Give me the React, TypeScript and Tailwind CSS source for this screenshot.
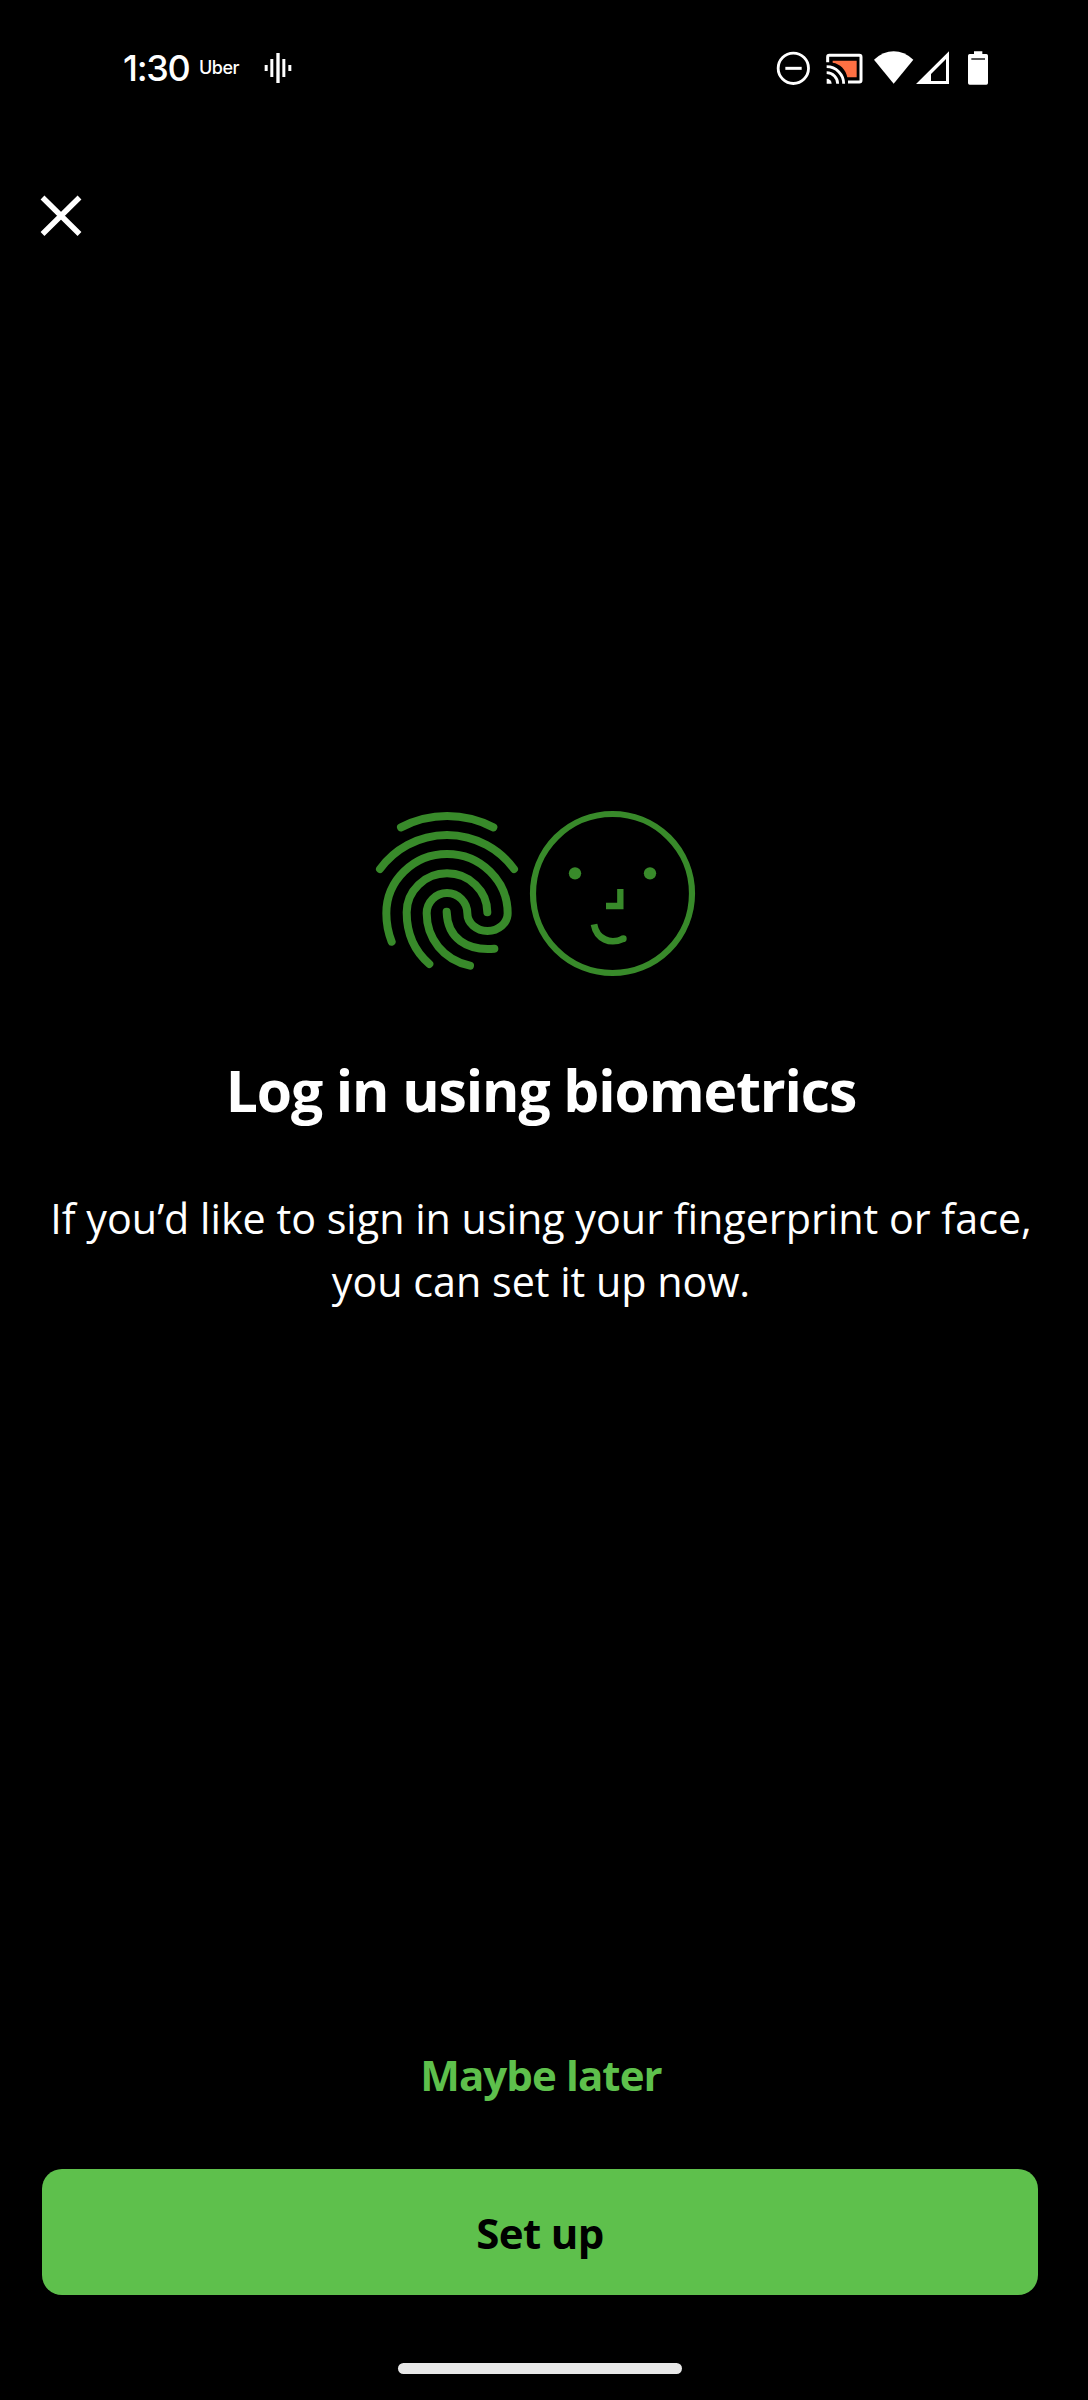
function StatusBar() {
  return (
    <header className="flex h-[136px] items-center pl-[123px]">
      <span className="w-[76px] font-['Inter'] text-[36px] leading-none font-medium tracking-[-1.3px]">1:30</span>
      <span className="w-[65px] font-['Inter'] text-[18px] leading-none font-medium tracking-[-0.5px]">Uber</span>
      <svg className="h-[30px] w-[30px]" viewBox="0 0 90 90" fill="white">
        <rect x="2" y="36" width="9" height="18" />
        <rect x="19" y="18" width="9" height="54" />
        <rect x="37" y="0" width="10" height="90" />
        <rect x="55" y="18" width="9" height="54" />
        <rect x="73" y="36" width="9" height="18" />
      </svg>
      <div className="mr-[99px] ml-auto flex h-[35px]">
        <svg className="mr-[14px] w-[35px]" viewBox="48 60 105 105" fill="none" stroke="white">
          <circle cx="100" cy="112" r="45.5" strokeWidth="8.5" />
          <path d="M76 112H125" strokeWidth="9" />
        </svg>
        <svg className="mr-[9px] w-[39px]" viewBox="195 60 117 105" fill="none">
          <path d="M218 89H290V139H262C258 116 240 98 218 95Z" fill="#ff7043" />
          <path d="M203 94V78Q203 73 208 73H298Q303 73 303 78V148Q303 153 298 153H264" stroke="white" strokeWidth="9" />
          <path d="M200 107A51 51 0 0 1 251 158M200 125A33 33 0 0 1 233 158" stroke="white" strokeWidth="8.5" />
          <path d="M200 143A15 15 0 0 1 215 158H200Z" fill="white" />
        </svg>
        <svg className="mr-px w-[41px]" viewBox="339 60 123 105" fill="white">
          <path d="M342 86Q370 61 401 61T460 86L401 158Z" />
        </svg>
        <svg className="mr-[17px] w-[35px]" viewBox="465 60 105 105" fill="white">
          <path fillRule="evenodd" d="M468 159L567 61V159ZM513 150H558V84L513 129Z" />
        </svg>
        <svg className="w-[22px]" viewBox="621 60 66 105">
          <path d="M642 61H667V69H679Q684 69 684 74V156Q684 161 679 161H629Q624 161 624 156V74Q624 69 629 69H642Z" fill="white" />
          <path d="M634 84H675" stroke="black" strokeWidth="4" />
        </svg>
      </div>
    </header>
  );
}

function BiometricsIcon() {
  return (
    <svg className="ml-[360px] h-[190px] w-[350px]" viewBox="0 0 1050 570" fill="none" stroke="#388a2a" strokeLinecap="round">
      <g strokeWidth="24">
        <path d="M123 97A299 299 0 0 1 400 97" />
        <path d="M60 222A249 249 0 0 1 462 222" />
        <path d="M95 440Q79 400 79 355A182 178 0 0 1 443 355A60.5 53 0 0 1 322 355A61 61 0 0 0 200 355C200 430 250 495 330 512" />
        <path d="M382 352A121 117 0 0 0 140 352C140 420 165 470 208 507" />
        <path d="M260 350C262 430 320 468 403 461" />
      </g>
      <g transform="translate(465 0)">
        <circle cx="292.5" cy="295.5" r="238.5" strokeWidth="18.5" />
        <g fill="#388a2a" stroke="none">
          <circle cx="180" cy="235" r="18.5" />
          <circle cx="405" cy="235" r="18.5" />
          <circle cx="325" cy="431" r="10" />
        </g>
        <path d="M316 282V333H273" strokeWidth="19" strokeLinecap="butt" />
        <path d="M237 388C245 432 285 450 325 431" strokeWidth="20" strokeLinecap="butt" />
      </g>
    </svg>
  );
}

export default function App() {
  return (
    <div className="flex h-[2400px] w-[1088px] flex-col bg-black font-['Open_Sans',sans-serif] text-white">
      <StatusBar />
      <button aria-label="Close" className="mt-[58px] ml-[40px] h-[42px] w-[42px]">
        <svg className="h-full w-full" viewBox="0 0 42 42" stroke="white" strokeWidth="5.5">
          <path d="M2.5 3.5L39.5 40M39.5 3.5L2.5 40" />
        </svg>
      </button>
      <main className="mt-[559px] flex w-[1080px] flex-1 flex-col">
        <BiometricsIcon />
        <h1 className="mt-[65px] pl-[2px] text-center text-[57px] leading-[80px] font-bold tracking-[-1.1px]">Log in using biometrics</h1>
        <p className="mt-[57px] pl-[2px] text-center text-[41.25px] leading-[63px] whitespace-nowrap">
          <span className="block">If you’d like to sign in using your fingerprint or face,</span>
          <span className="block">you can set it up now.</span>
        </p>
      </main>
      <footer className="flex w-[1080px] flex-col items-center">
        <button className="mb-[62px] h-[64px] pl-[2px] text-[42px] leading-[64px] font-bold tracking-[-0.9px] text-[#5ec04c]">Maybe later</button>
        <button className="h-[126px] w-[996px] rounded-[20px] bg-[#5ec04c] text-[42px] font-bold tracking-[-0.6px] text-black">Set up</button>
        <div className="mt-[68px] mb-[26px] h-[11px] w-[284px] rounded-full bg-[#e8e8e8]" />
      </footer>
    </div>
  );
}
